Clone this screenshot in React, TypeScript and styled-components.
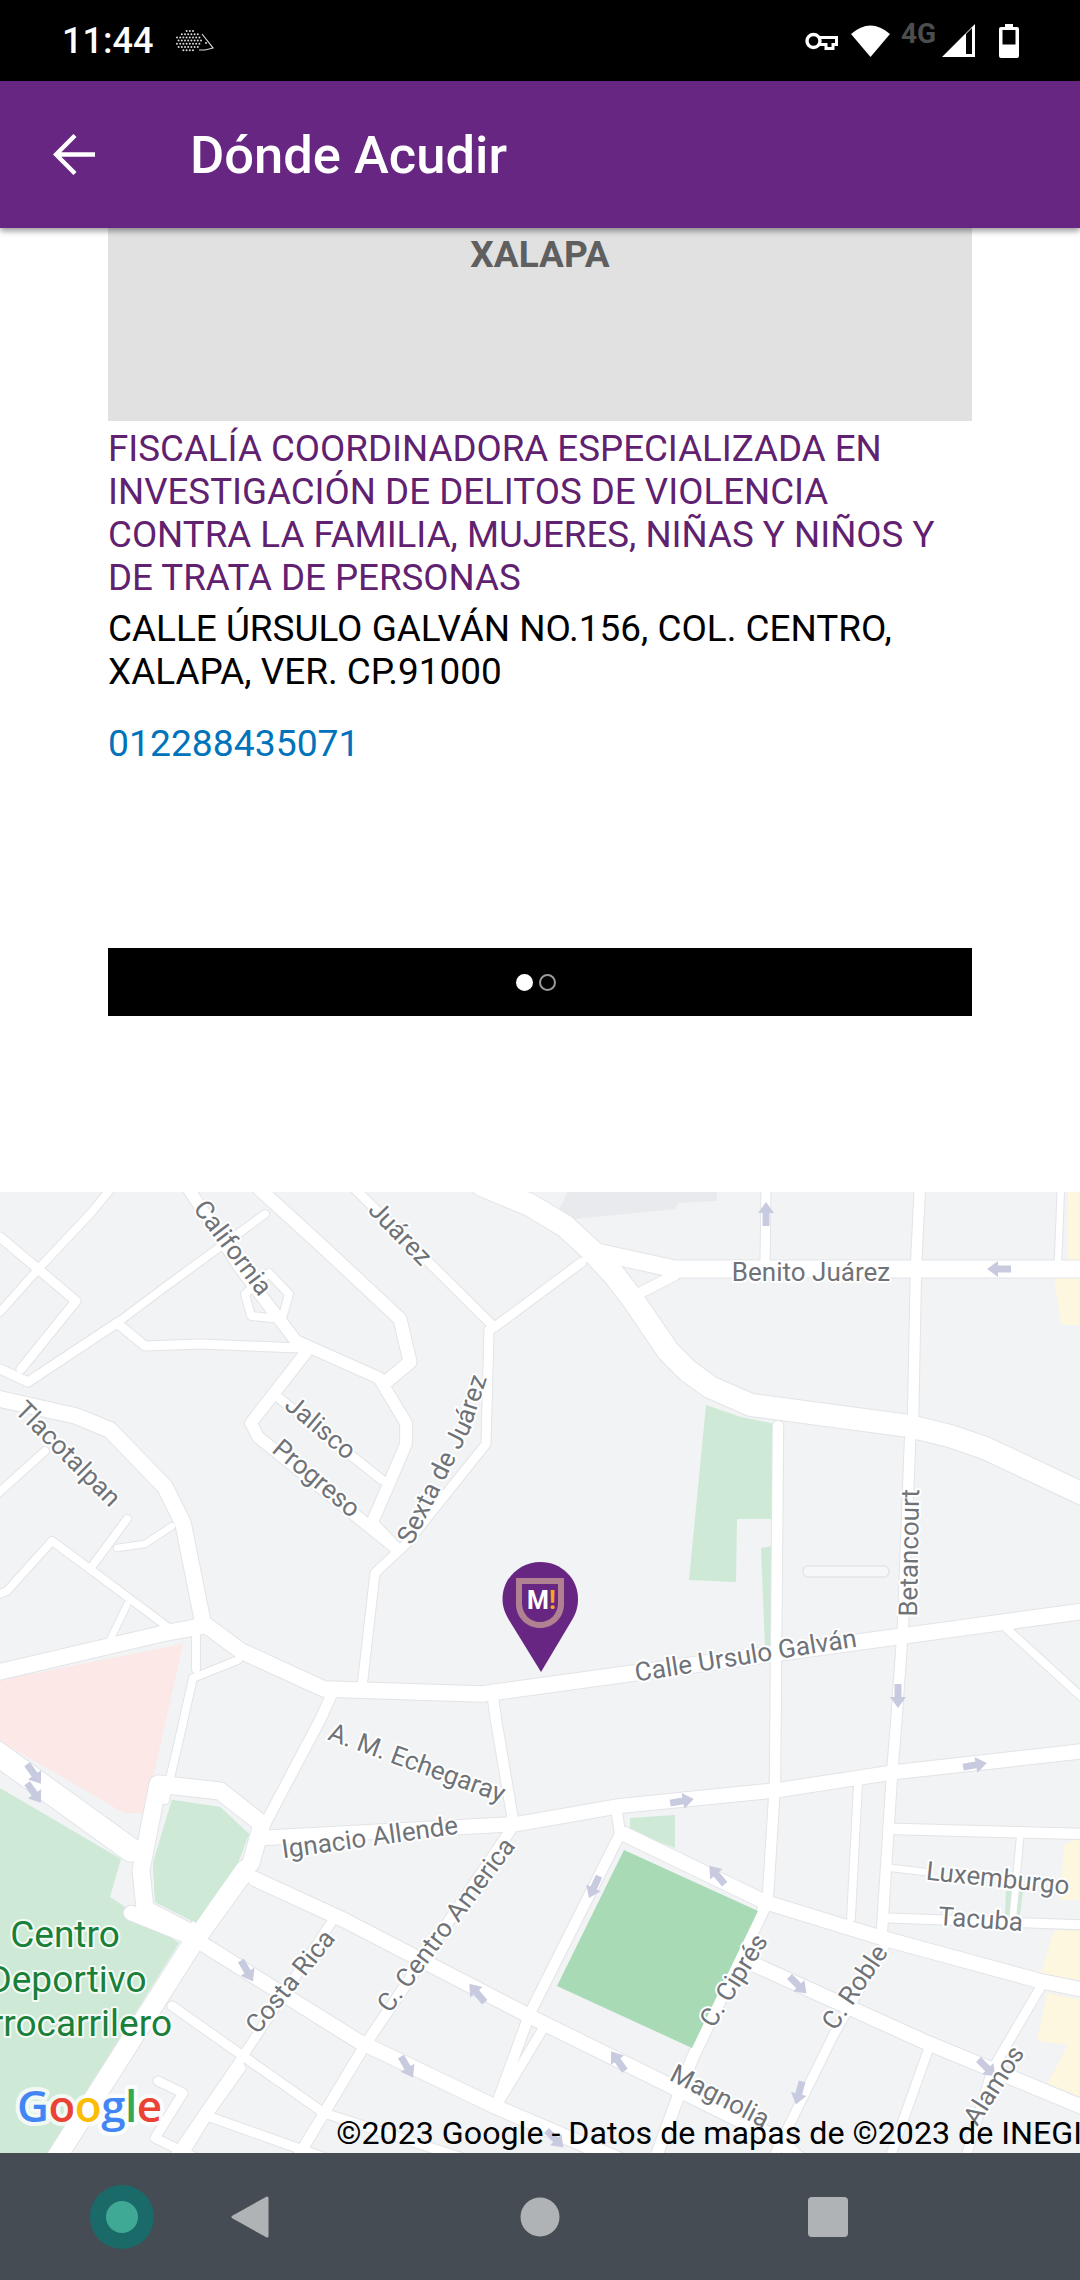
import { createGlobalStyle, styled } from "styled-components";

const GlobalStyle = createGlobalStyle`
  html, body { margin: 0; padding: 0; background: #fff; }
  body { font-family: Roboto, "Noto Sans", sans-serif; }
  * { box-sizing: border-box; }
`;

type Road = [number, number[]];

const ROAD_SCALE = 1.3;

// coordinates are page pixels, the map viewBox starts at y=1192
const roads: Road[] = [
  [17, [482, 1185, 530, 1205, 565, 1226, 592, 1251, 615, 1276, 634, 1301, 668, 1351, 688, 1371, 710, 1387, 751, 1405, 909, 1426, 950, 1436, 985, 1448, 1085, 1495]],
  [13, [592, 1251, 675, 1269, 1085, 1269]],
  [7, [766, 1185, 765, 1266]],
  [8, [920, 1185, 916, 1266, 913, 1423, 910, 1441, 903, 1626, 896, 1725]],
  [5, [1061, 1185, 1058, 1262]],
  [8, [675, 1275, 630, 1298]],
  [7, [582, 1262, 496, 1326, 489, 1330, 486, 1444, 406, 1544, 375, 1573, 362, 1687]],
  [7, [351, 1185, 493, 1326]],
  [10, [255, 1185, 324, 1248, 400, 1319, 410, 1362, 386, 1382]],
  [9, [186, 1185, 241, 1269, 296, 1341, 379, 1378, 406, 1423, 406, 1444, 372, 1523, 396, 1548]],
  [9, [307, 1351, 251, 1423, 258, 1437, 396, 1548]],
  [7, [279, 1398, 382, 1480]],
  [6, [269, 1273, 289, 1294, 282, 1319, 251, 1316, 245, 1294, 269, 1273]],
  [7, [300, 1348, 200, 1344, 145, 1346, 117, 1323, 28, 1382, 0, 1369]],
  [6, [117, 1323, 165, 1287, 265, 1214]],
  [6, [114, 1185, 90, 1214, 41, 1266, 0, 1312]],
  [7, [0, 1237, 76, 1301, 21, 1369]],
  [12, [-5, 1398, 76, 1416, 110, 1430, 165, 1487, 183, 1523, 203, 1623, 241, 1651, 324, 1689, 482, 1694, 1085, 1611]],
  [12, [-5, 1673, 165, 1633, 203, 1626]],
  [5, [172, 1526, 145, 1544, 117, 1548]],
  [6, [127, 1519, 90, 1569]],
  [6, [52, 1541, 90, 1569, 169, 1628]],
  [6, [52, 1541, 7, 1591, -5, 1596]],
  [6, [45, 1451, -5, 1496]],
  [5, [127, 1605, 110, 1640]],
  [6, [238, 1660, 193, 1678, 179, 1740, 165, 1800]],
  [6, [196, 1633, 196, 1669]],
  [8, [331, 1696, 320, 1720, 265, 1824]],
  [8, [493, 1698, 496, 1720, 513, 1820]],
  [8, [778, 1426, 775, 1784, 768, 1895]],
  [8, [896, 1725, 892, 1774, 882, 1931]],
  [6, [1006, 1628, 1085, 1700]],
  [11, [262, 1838, 517, 1824, 620, 1806, 779, 1790, 896, 1772, 1085, 1751]],
  [18, [-5, 1752, 131, 1850]],
  [13, [158, 1784, 220, 1791, 262, 1824, 251, 1863, 193, 1934, 145, 1909, 141, 1870, 158, 1784]],
  [15, [245, 1870, 196, 1938, 55, 2160]],
  [11, [131, 1913, 193, 1938, 358, 2041, 496, 2107, 620, 2160]],
  [11, [255, 1879, 344, 1920, 537, 2020, 778, 2139, 800, 2160]],
  [11, [624, 1834, 765, 1902, 882, 1938, 1040, 1981, 1085, 1990]],
  [11, [751, 1963, 923, 2041, 1085, 2108]],
  [8, [617, 1813, 620, 1834, 530, 2013, 496, 2106]],
  [9, [765, 1906, 692, 2059, 655, 2160]],
  [7, [889, 1938, 834, 2034, 772, 2160]],
  [8, [510, 1831, 365, 2045, 296, 2160]],
  [7, [331, 1923, 241, 2059, 172, 2160]],
  [7, [172, 2006, 324, 2113, 469, 2160]],
  [7, [544, 2027, 496, 2107]],
  [7, [1040, 1988, 992, 2070, 965, 2160]],
  [7, [930, 2045, 889, 2160]],
  [8, [896, 1829, 1085, 1834]],
  [5, [892, 1868, 925, 1872]],
  [7, [889, 1918, 1085, 1925]],
  [5, [1020, 1838, 1013, 1916]],
  [6, [858, 1784, 851, 1918]],
  [7, [158, 2081, 183, 2093, 155, 2138, 200, 2160]],
  [7, [207, 2116, 180, 2160]],
  [7, [207, 2116, 331, 2160]],
  [7, [241, 2068, 186, 2145]],
];

const arrows: [number, number, number][] = [
  [766, 1214, 0], [999, 1269, -90], [898, 1696, 180], [34, 1774, 145], [34, 1793, 145],
  [975, 1765, 80], [682, 1801, 80], [717, 1875, -40], [594, 1887, 205], [798, 1985, 135],
  [247, 1971, 150], [477, 1993, -40], [407, 2067, 150], [618, 2061, -35], [799, 2093, 195],
  [987, 2068, 135], [555, 2139, 135],
];

type Label = { text: string; x: number; y: number; a: number };

const labels: Label[] = [
  { text: "Benito Juárez", x: 811, y: 1281, a: 0 },
  { text: "California", x: 226, y: 1253, a: 53 },
  { text: "Juárez", x: 394, y: 1239, a: 46 },
  { text: "Jalisco", x: 315, y: 1434, a: 40 },
  { text: "Progreso", x: 311, y: 1485, a: 40 },
  { text: "Tlacotalpan", x: 62, y: 1460, a: 45 },
  { text: "Betancourt", x: 918, y: 1553, a: -89 },
  { text: "Calle Ursulo Galván", x: 747, y: 1664, a: -9 },
  { text: "A. M. Echegaray", x: 414, y: 1771, a: 20 },
  { text: "Ignacio Allende", x: 371, y: 1846, a: -8 },
  { text: "C. Centro America", x: 453, y: 1930, a: -53 },
  { text: "Costa Rica", x: 297, y: 1987, a: -51 },
  { text: "C. Ciprés", x: 741, y: 1985, a: -58 },
  { text: "C. Roble", x: 862, y: 1992, a: -56 },
  { text: "Alamos", x: 1001, y: 2090, a: -57 },
  { text: "Magnolia", x: 716, y: 2104, a: 27 },
  { text: "Luxemburgo", x: 997, y: 1887, a: 6 },
  { text: "Tacuba", x: 980, y: 1928, a: 4 },
];

const App = () => {
  // little cloud of dots for the hedgehog notification icon
  const quills: [number, number][] = [];
  for (let row = 0; row < 7; row++) {
    for (let col = 0; col < 9; col++) {
      const x = 2 + col * 3.2 + (row % 2) * 1.6;
      const y = 2 + row * 3.2;
      const dx = (x - 14) / 13;
      const dy = (y - 12) / 11;
      if (dx * dx + dy * dy < 1) quills.push([x, y]);
    }
  }

  return (
    <Screen>
      <GlobalStyle />
      <StatusBar>
        <StatusGroup>
          <Clock>11:44</Clock>
          <Hedgehog viewBox="0 0 40 24" width="40" height="24">
            {quills.map(([x, y]) => (
              <circle key={`${x}-${y}`} cx={x} cy={y} r="1" fill="#d8d8d8" />
            ))}
            <path d="M27 5 L38 19 L30 21 L24 21" fill="none" stroke="#d8d8d8" strokeWidth="1.2" />
            <circle cx="31" cy="14" r="1" fill="#d8d8d8" />
          </Hedgehog>
        </StatusGroup>
        <StatusGroup>
          <StatusIcon viewBox="0 0 33 18" width="33" height="18" $gap={0}>
            <circle cx="8.500" cy="9" r="6.500" fill="none" stroke="#fff" strokeWidth="3.400" />
            <path d="M15 5.500h16.500v7h-3.500v4h-7v-4h-6" fill="none" stroke="#fff" strokeWidth="3" />
          </StatusIcon>
          <StatusIcon viewBox="0 0 39 33" width="39" height="33" $gap={13}>
            <path d="M19.500 33 L0 10 Q19.500 -7 39 10 Z" fill="#fff" />
          </StatusIcon>
          <NetworkType>4G</NetworkType>
          <StatusIcon viewBox="0 0 33 33" width="33" height="33" $gap={5}>
            <path d="M33 0 V33 H0 Z" fill="#fff" />
            <path d="M24 10 L30 4 V30 H24 Z" fill="#000" />
          </StatusIcon>
          <StatusIcon viewBox="0 0 20 34" width="20" height="34" $gap={24}>
            <path d="M6 0h8v3h4a2 2 0 0 1 2 2v27a2 2 0 0 1-2 2H2a2 2 0 0 1-2-2V5a2 2 0 0 1 2-2h4z" fill="#fff" />
            <rect x="3.500" y="6" width="13" height="14.500" fill="#000" />
          </StatusIcon>
        </StatusGroup>
      </StatusBar>

      <AppBar>
        <BackIcon viewBox="0 0 42 41" width="42" height="41">
          <path d="M42 20.500H3M22 1.500L3 20.500l19 19" fill="none" stroke="#fff" strokeWidth="4.400" />
        </BackIcon>
        <Title>Dónde Acudir</Title>
      </AppBar>

      <Content>
        <CityCard>
          <CityName>XALAPA</CityName>
        </CityCard>
        <OfficeName>
          FISCALÍA COORDINADORA ESPECIALIZADA EN INVESTIGACIÓN DE DELITOS DE VIOLENCIA CONTRA LA
          FAMILIA, MUJERES, NIÑAS Y NIÑOS Y DE TRATA DE PERSONAS
        </OfficeName>
        <Address>CALLE ÚRSULO GALVÁN NO.156, COL. CENTRO, XALAPA, VER. CP.91000</Address>
        <Phone>012288435071</Phone>
        <Pager>
          <PagerDot $active />
          <PagerDot />
        </Pager>
      </Content>

      <MapArea>
        <svg viewBox="0 1192 1080 961" width="1080" height="961">
          <rect x="0" y="1192" width="1080" height="961" fill="#f1f3f4" />
          {/* blocks */}
          <path d="M568 1191H717V1201L679 1203 675 1209 575 1219 559 1210Z" fill="#e8eaed" />
          <path d="M0 1680L183 1644 145 1813H124L0 1741Z" fill="#fce8e6" />
          <path d="M0 1788L121 1859 110 1897 179 1943 48 2153H0Z" fill="#ceead6" />
          <path d="M172 1800L220 1807 249 1834 238 1863 196 1923 155 1902 153 1863Z" fill="#ceead6" />
          <path d="M706 1405L741 1417 780 1425 775 1519H737L736 1582 689 1580Z" fill="#ceead6" />
          <path d="M761 1548L782 1544 779 1648H765Z" fill="#ceead6" />
          <path d="M630 1818L675 1815V1848L630 1831Z" fill="#ceead6" />
          <path d="M1006 1891H1023L1020 1915H1005Z" fill="#ceead6" />
          <path d="M1068 1191H1080V1260H1068ZM1054 1276H1080V1325H1061ZM1064 1845L1080 1838V1900H1060ZM1054 1931L1080 1928V1980L1040 1975ZM1047 1993L1080 2000V2098L1047 2084 1068 2045 1037 2041Z" fill="#fef7e0" />

          {roads.map(([w, pts], i) => (
            <polyline key={`c${i}`} points={pts.join(" ")} fill="none" stroke="#e2e4e8" strokeWidth={w * ROAD_SCALE + 2} strokeLinejoin="round" strokeLinecap="round" />
          ))}
          {roads.map(([w, pts], i) => (
            <polyline key={`r${i}`} points={pts.join(" ")} fill="none" stroke="#fff" strokeWidth={w * ROAD_SCALE} strokeLinejoin="round" strokeLinecap="round" />
          ))}
          <path d="M172 1800L220 1807 249 1834 238 1863 196 1923 155 1902 153 1863Z" fill="#ceead6" />
          <path d="M624 1850L758 1911 692 2048 557 1986Z" fill="#a8dab5" />
          <rect x="803" y="1566" width="86" height="11" rx="5" fill="#f6f7f8" stroke="#e3e5e8" strokeWidth="1.500" />

          {arrows.map(([x, y, a]) => (
            <path key={`${x}-${y}`} d="M0-12L8-1H3.500V12H-3.500V-1H-8Z" fill="#c8cbe0" transform={`translate(${x} ${y}) rotate(${a})`} />
          ))}

          {labels.map((l) => (
            <StreetLabel key={l.text} textAnchor="middle" transform={`translate(${l.x} ${l.y}) rotate(${l.a})`}>
              {l.text}
            </StreetLabel>
          ))}
          <path id="sexta" d="M412 1546 L470 1430 L491 1366" fill="none" />
          <StreetLabel>
            <textPath href="#sexta">Sexta de Juárez</textPath>
          </StreetLabel>

          <ParkLabel x="65" y="1947" textAnchor="middle">Centro</ParkLabel>
          <ParkLabel x="67" y="1992" textAnchor="middle">Deportivo</ParkLabel>
          <ParkLabel x="172" y="2036" textAnchor="end">Ferrocarrilero</ParkLabel>

          <GoogleMark x="17" y="2122">
            <tspan fill="#4285f4">G</tspan>
            <tspan fill="#ea4335">o</tspan>
            <tspan fill="#fbbc05">o</tspan>
            <tspan fill="#4285f4">g</tspan>
            <tspan fill="#34a853">l</tspan>
            <tspan fill="#ea4335">e</tspan>
          </GoogleMark>

          {/* pin */}
          <path d="M540.500 1562C520 1562 502.500 1578 502.500 1599C502.500 1607 505 1613 509 1620L541 1672L572 1620C576 1613 578 1607 578 1599C578 1578 561 1562 540.500 1562Z" fill="#662681" />
          <path d="M516 1578H564V1604C564 1618 553 1628 540 1628C527 1628 516 1618 516 1604Z" fill="#b08291" />
          <path d="M522 1584H558V1603C558 1614 550 1622 540 1622C530 1622 522 1614 522 1603Z" fill="#662681" />
          <PinLetter x="527" y="1609">M<tspan fill="#f5a81c">!</tspan></PinLetter>
        </svg>
        <Copyright>©2023 Google - Datos de mapas de ©2023 de INEGI</Copyright>
      </MapArea>

      <NavBar>
        <NavIcon viewBox="0 0 64 64" width="64" height="64" $gap={90}>
          <circle cx="32" cy="32" r="32" fill="#196a68" />
          <circle cx="32" cy="32" r="16" fill="#3fa996" />
        </NavIcon>
        <NavIcon viewBox="0 0 38 44" width="38" height="44" $gap={77}>
          <path d="M36 3L2 22l34 19z" fill="#b0b3b5" stroke="#b0b3b5" strokeWidth="3" strokeLinejoin="round" />
        </NavIcon>
        <NavIcon viewBox="0 0 40 40" width="40" height="40" $gap={251}>
          <circle cx="20" cy="20" r="19.500" fill="#b0b3b5" />
        </NavIcon>
        <NavSquare />
      </NavBar>
    </Screen>
  );
};

const Screen = styled.div`
  width: 1080px;
  height: 2280px;
  display: flex;
  flex-direction: column;
  overflow: hidden;
  background: #fff;
`;

const StatusBar = styled.div`
  height: 81px;
  flex-shrink: 0;
  background: #000;
  display: flex;
  align-items: center;
  justify-content: space-between;
  padding: 0 61px 0 62px;
`;

const StatusGroup = styled.div`
  display: flex;
  align-items: center;
`;

const Clock = styled.span`
  color: #fff;
  font-size: 36px;
  font-weight: 500;
`;

const Hedgehog = styled.svg`
  margin-left: 22px;
`;

const StatusIcon = styled.svg<{ $gap: number }>`
  margin-left: ${(p) => p.$gap}px;
`;

const NetworkType = styled.span`
  margin-left: 11px;
  margin-bottom: 14px;
  width: 36px;
  color: #4d4d4d;
  font-size: 28px;
  font-weight: 700;
`;

const AppBar = styled.header`
  position: relative;
  z-index: 2;
  height: 147px;
  flex-shrink: 0;
  background: #662681;
  display: flex;
  align-items: center;
  padding-left: 53px;
  box-shadow: 0 3px 6px rgba(0, 0, 0, 0.4);
`;

const BackIcon = styled.svg`
  margin-top: -1px;
`;

const Title = styled.h1`
  margin: 0 0 0 95px;
  color: #fff;
  font-size: 52.500px;
  font-weight: 500;
`;

const Content = styled.main`
  height: 964px;
  flex-shrink: 0;
  padding: 0 108px;
  display: flex;
  flex-direction: column;
`;

const CityCard = styled.div`
  height: 193px;
  background: #e1e1e1;
  text-align: center;
  padding-top: 5px;
`;

const CityName = styled.div`
  color: #5f5f5f;
  font-size: 37px;
  font-weight: 700;
  line-height: 44px;
`;

const OfficeName = styled.div`
  margin-top: 6px;
  color: #5f2170;
  font-size: 36.700px;
  line-height: 43px;
`;

const Address = styled.div`
  margin-top: 8px;
  color: #000;
  font-size: 36.900px;
  line-height: 43px;
`;

const Phone = styled.div`
  margin-top: 29px;
  color: #0073bb;
  font-size: 37.300px;
  line-height: 43px;
`;

const Pager = styled.div`
  margin-top: 183px;
  height: 68px;
  background: #000;
  display: flex;
  align-items: center;
  justify-content: center;
  gap: 6px;
  padding-right: 8px;
`;

const PagerDot = styled.span<{ $active?: boolean }>`
  width: 17px;
  height: 17px;
  border-radius: 50%;
  background: ${(p) => (p.$active ? "#fff" : "transparent")};
  border: 2px solid ${(p) => (p.$active ? "#fff" : "#9a9a9a")};
`;

const MapArea = styled.section`
  position: relative;
  height: 961px;
  flex-shrink: 0;
  overflow: hidden;
  font-size: 0;
`;

const StreetLabel = styled.text`
  font-family: Roboto, sans-serif;
  font-size: 26px;
  fill: #6f7378;
  stroke: #fff;
  stroke-width: 4px;
  stroke-linejoin: round;
  paint-order: stroke;
`;

const ParkLabel = styled.text`
  font-family: Roboto, sans-serif;
  font-size: 37px;
  fill: #188038;
  stroke: #fff;
  stroke-opacity: 0.8;
  stroke-width: 4px;
  stroke-linejoin: round;
  paint-order: stroke;
`;

const GoogleMark = styled.text`
  font-family: "Open Sans", Roboto, sans-serif;
  font-size: 44px;
  font-weight: 600;
  letter-spacing: -0.5px;
  stroke: #fff;
  stroke-opacity: 0.75;
  stroke-width: 8px;
  stroke-linejoin: round;
  paint-order: stroke;
`;

const PinLetter = styled.text`
  font-family: Roboto, sans-serif;
  font-size: 25px;
  font-weight: 700;
  fill: #fff;
`;

const Copyright = styled.div`
  position: absolute;
  right: -2px;
  bottom: 2px;
  color: #000;
  font-size: 32.200px;
  line-height: 36px;
  white-space: nowrap;
`;

const NavBar = styled.nav`
  flex: 1;
  background: #464c53;
  display: flex;
  align-items: center;
`;

const NavIcon = styled.svg<{ $gap: number }>`
  margin-left: ${(p) => p.$gap}px;
`;

const NavSquare = styled.div`
  margin-left: 248px;
  width: 40px;
  height: 40px;
  border-radius: 4px;
  background: #b0b3b5;
`;

export default App;
